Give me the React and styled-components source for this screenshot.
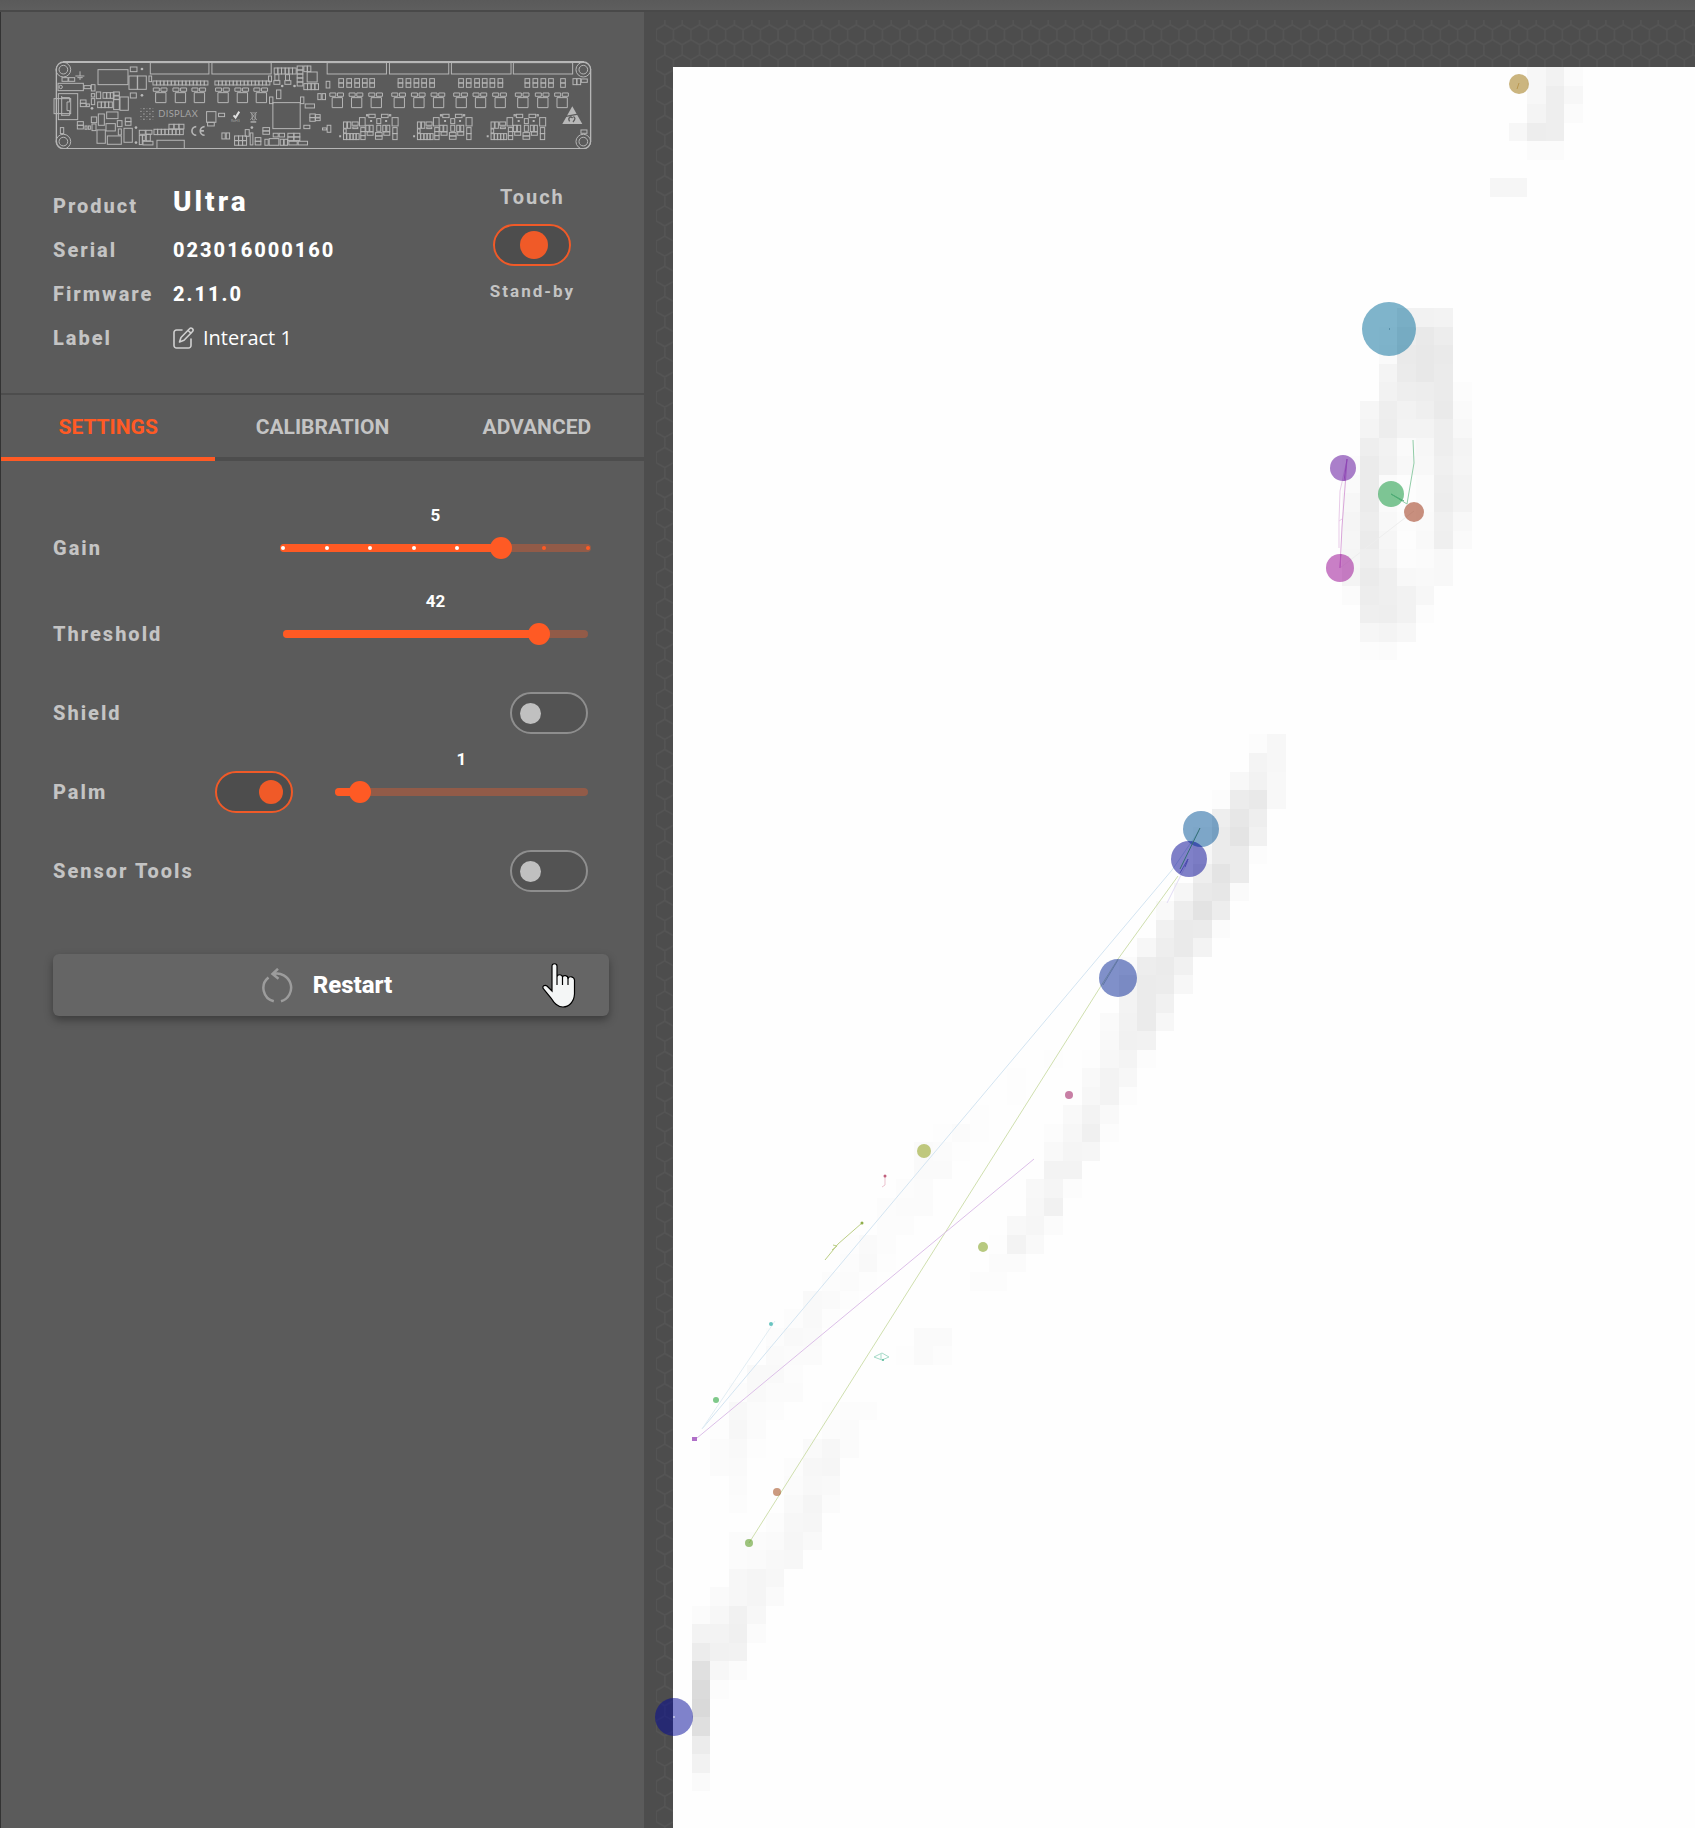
import React, { useState } from "react";
import styled, { createGlobalStyle } from "styled-components";

const color = {
  panel: "#5b5b5b",
  deep: "#4d4d4d",
  orange: "#ff5a24",
  knob: "#f05a28",
  muted: "#c4c4c4",
};

/* ---------- page ---------- */

const hexTile = (() => {
  let d = "";
  for (let r = 0; r < 5; r++)
    for (let c = 0; c < 7; c++) {
      d += `M${c * 174 + 87} ${r * 302}v47l87 50v101l-87 50l-87-50v-101l87-50m0 201v54`;
    }
  const svg = `<svg xmlns='http://www.w3.org/2000/svg' viewBox='0 0 1218 1510'><path d='${d}' fill='none' stroke='#545454' stroke-width='16'/></svg>`;
  return `url("data:image/svg+xml,${encodeURIComponent(svg)}")`;
})();

const GlobalStyle = createGlobalStyle`
  *, *::before, *::after { box-sizing: border-box; }
  body { margin: 0; background: ${color.deep}; font-family: Roboto, "Liberation Sans", sans-serif; }
  button { font: inherit; color: inherit; border: 0; background: none; padding: 0; cursor: pointer; }
`;

const Page = styled.div`
  min-height: 100vh;
  display: flex;
  flex-direction: column;
  overflow: hidden;
`;

const TopBar = styled.header`
  height: 12px;
  background: linear-gradient(#5a5a5a, #5e5e5e);
  border-bottom: 2px solid #494949;
`;

const Body = styled.div`
  flex: 1;
  display: grid;
  grid-template-columns: 644px minmax(0, 1fr);
`;

const Sidebar = styled.aside`
  background: ${color.panel};
  border-left: 1px solid #333;
`;

const Stage = styled.main`
  padding: 8px 0 0 12px;
  background-image: ${hexTile};
  background-size: 122px 151px;
  background-origin: content-box;
  background-clip: content-box;
`;

const Canvas = styled.div`
  margin: 47px 0 0 17px;
  background: #fefefe;
  svg {
    display: block;
    width: 100%;
    height: auto;
    overflow: visible;
  }
`;

/* ---------- product header ---------- */

const Product = styled.section`
  padding: 48px 52px 33px;
  border-bottom: 2px solid ${color.deep};
`;

const BoardSvg = styled.svg`
  display: block;
  width: 100%;
  height: auto;
`;

const Summary = styled.div`
  display: flex;
  justify-content: space-between;
  margin-top: 35px;
`;

const Facts = styled.dl`
  display: grid;
  grid-template-columns: 120px auto;
  grid-auto-rows: 44px;
  align-items: center;
  margin: 0;
  font-size: 20px;
  font-weight: 800;
  line-height: 24px;
  letter-spacing: 2px;
`;

const Term = styled.dt`
  color: ${color.muted};
`;

const Fact = styled.dd`
  margin: 0;
  color: #fff;
`;

const ProductName = styled(Fact)`
  padding-bottom: 8px;
  font-size: 28px;
  letter-spacing: 3px;
`;

const EditButton = styled.button`
  display: flex;
  align-items: center;
  gap: 9px;
  && {
    font-family: "Open Sans", "Noto Sans", sans-serif;
    font-weight: 400;
  }
  letter-spacing: 0;
`;

const TouchBox = styled.div`
  display: flex;
  flex-direction: column;
  align-items: center;
  gap: 15px;
  margin-right: 17px;
  padding-top: 1px;
  color: ${color.muted};
  font-weight: 700;
  letter-spacing: 2px;
`;

const TouchTitle = styled.label`
  font-size: 20px;
  line-height: 24px;
`;

const TouchState = styled.span`
  font-size: 17px;
  line-height: 20px;
`;

const Switch = styled.input.attrs({ type: "checkbox", role: "switch" })`
  appearance: none;
  flex: none;
  display: flex;
  align-items: center;
  justify-content: ${(p) => (p.$half ? "center" : p.checked ? "flex-end" : "flex-start")};
  width: 78px;
  height: 42px;
  margin: 0;
  padding: ${(p) => (p.$half ? "0 6px 0 10px" : "0 8px")};
  border: 2px solid ${(p) => (p.checked ? color.knob : "#8e8e8e")};
  border-radius: 21px;
  background: ${(p) => (p.checked ? color.deep : "#535353")};
  cursor: pointer;
  &::before {
    content: "";
    width: ${(p) => (p.$half ? 28 : p.checked ? 24 : 21)}px;
    height: ${(p) => (p.$half ? 28 : p.checked ? 24 : 21)}px;
    border-radius: 50%;
    background: ${(p) => (p.checked ? color.knob : "#c0c0c0")};
  }
`;

/* ---------- tabs ---------- */

const Tabs = styled.nav`
  display: grid;
  grid-template-columns: repeat(3, 1fr);
`;

const Tab = styled.button`
  && {
    height: 66px;
    padding-top: 2px;
    border-bottom: 4px solid ${(p) => (p.$active ? color.orange : color.deep)};
    color: ${(p) => (p.$active ? color.orange : color.muted)};
    font-size: 21px;
    font-weight: 700;
  }
`;

/* ---------- settings ---------- */

const Form = styled.form`
  display: flex;
  flex-direction: column;
  gap: 15px;
  padding: 44px 35px 0 52px;
`;

const SliderGroup = styled.div`
  display: flex;
  flex-direction: column;
`;

const Row = styled.div`
  display: flex;
  align-items: center;
  justify-content: space-between;
  padding-right: 21px;
`;

const RowLabel = styled.label`
  flex: 1;
  color: ${color.muted};
  font-size: 20px;
  font-weight: 800;
  line-height: 24px;
  letter-spacing: 2px;
`;

const SliderBox = styled.div`
  width: ${(p) => (p.$short ? 253 : 305)}px;
  margin-left: ${(p) => (p.$short ? 42 : 0)}px;
  height: 86px;
  display: flex;
  flex-direction: column;
  gap: 11px;
`;

const Value = styled.output`
  color: #fff;
  font-size: 17px;
  font-weight: 700;
  line-height: 20px;
  text-align: center;
`;

const RailBox = styled.div`
  position: relative;
  height: 24px;
  display: flex;
  align-items: center;
`;

const Rail = styled.div`
  flex: 1;
  height: 8px;
  margin: 0 ${(p) => (p.$ticks ? -3 : 0)}px;
  border-radius: 4px;
  background: #925b48;
`;

const Fill = styled.div`
  height: 8px;
  border-radius: 4px;
  background: ${color.orange};
`;

const Ticks = styled.div`
  position: absolute;
  inset: 0 -2px;
  display: flex;
  align-items: center;
  justify-content: space-between;
`;

const Tick = styled.i`
  width: 4px;
  height: 4px;
  border-radius: 50%;
  background: ${(p) => (p.$on ? "#fff" : color.orange)};
`;

const Range = styled.input.attrs({ type: "range" })`
  appearance: none;
  position: absolute;
  inset: 0 -11px;
  width: calc(100% + 22px);
  height: 24px;
  margin: 0;
  background: transparent;
  cursor: pointer;
  &::-webkit-slider-thumb {
    appearance: none;
    width: 22px;
    height: 22px;
    border: 0;
    border-radius: 50%;
    background: ${color.orange};
  }
`;

const RestartButton = styled.button`
  && {
    position: relative;
    display: flex;
    align-items: center;
    justify-content: center;
    gap: 20px;
    height: 62px;
    margin-top: 47px;
    padding-right: 8px;
    border-radius: 6px;
    background: #656565;
    box-shadow: 0 4px 8px rgba(0, 0, 0, 0.35);
    color: #fff;
    font-size: 24px;
    font-weight: 800;
  }
`;

const Pointer = styled.svg`
  position: absolute;
  right: 33px;
  top: 9px;
`;

/* ---------- circuit board drawing ---------- */

const plain = [
  [67, 97, 18, 11], [87, 97, 18, 11], [55, 114, 76, 22], [133, 121, 20, 9], [155, 118, 11, 19],
  [43, 160, 50, 45], [56, 145, 58, 78], [175, 73, 90, 45], [272, 65, 20, 14], [268, 92, 25, 40],
  [294, 92, 26, 40], [328, 92, 8, 17], [272, 143, 18, 15], [332, 52, 176, 34], [517, 52, 178, 34],
  [863, 52, 178, 34], [1050, 52, 178, 34], [1236, 52, 179, 34], [1422, 52, 178, 34], [687, 92, 9, 17],
  [170, 140, 13, 20], [221, 140, 18, 10], [221, 152, 18, 10], [222, 163, 17, 30], [241, 155, 25, 40],
  [141, 176, 8, 8], [155, 145, 10, 10], [155, 160, 10, 18], [201, 200, 34, 20], [176, 206, 18, 34],
  [155, 215, 16, 17], [157, 236, 12, 20], [136, 242, 6, 10], [146, 242, 6, 10], [199, 235, 28, 22],
  [172, 254, 25, 40], [203, 272, 42, 25], [233, 226, 14, 18], [236, 251, 9, 18], [253, 249, 25, 42],
  [62, 247, 10, 18], [299, 255, 18, 12], [319, 255, 18, 12], [299, 270, 9, 28], [309, 270, 8, 16],
  [320, 267, 12, 20], [310, 288, 30, 11], [352, 285, 82, 25], [501, 199, 28, 32], [504, 231, 20, 11],
  [537, 204, 18, 10], [547, 263, 10, 18], [560, 263, 10, 18], [617, 253, 12, 20], [632, 263, 8, 36],
  [676, 282, 10, 18], [689, 280, 29, 20], [722, 282, 10, 18], [734, 282, 10, 18], [701, 264, 15, 11],
  [719, 264, 16, 11], [748, 288, 25, 11], [776, 288, 28, 11], [700, 172, 82, 78], [690, 155, 10, 20],
  [783, 155, 10, 20], [711, 134, 13, 26], [797, 176, 28, 12], [828, 208, 14, 8], [828, 218, 14, 8],
  [793, 240, 18, 10], [863, 240, 11, 21], [849, 248, 12, 6], [793, 62, 10, 17], [804, 62, 10, 17],
  [803, 80, 30, 30], [706, 88, 12, 17], [738, 88, 12, 17], [703, 106, 18, 11], [736, 106, 18, 11],
  [835, 145, 10, 18], [848, 145, 10, 18], [860, 108, 11, 20], [1601, 100, 11, 18], [1613, 100, 11, 18],
  [1626, 101, 18, 10], [1625, 254, 18, 10],
];

/* x, y, cell width, cell height, columns, rows */
const cells = [
  [340, 107, 11, 12, 15, 1], [526, 107, 11, 12, 15, 1], [190, 142, 11, 17, 3, 1], [174, 170, 11, 17, 4, 1],
  [122, 164, 17, 10, 1, 2], [113, 229, 18, 11, 1, 2], [257, 218, 17, 11, 1, 2], [388, 237, 15, 14, 3, 1],
  [343, 252, 11, 16, 8, 1], [585, 272, 12, 14, 3, 2], [647, 277, 17, 11, 1, 2], [670, 247, 20, 10, 1, 2],
  [745, 264, 18, 11, 2, 2], [811, 206, 16, 11, 1, 2], [704, 68, 11, 18, 6, 1], [773, 62, 17, 12, 1, 5],
  [793, 115, 11, 18, 4, 1],
  ...[58, 82, 106, 129, 151, 236, 260, 284, 307, 331, 418, 441, 466, 489, 512, 536, 617, 641, 665, 688, 724].map(
    (x) => [840 + x, 100, 14, 13, 1, 2]
  ),
];

const chips = [
  ...[341, 400, 457, 528, 586, 643].map((x) => [x, 128]),
  ...[31, 89, 148, 217, 276, 335, 403, 461, 520, 588, 648, 706].map((x) => [840 + x, 143]),
];

const cluster = [
  [72, 230, 10, 19], [84, 230, 10, 19], [98, 230, 18, 10], [72, 251, 8, 12], [100, 245, 15, 5],
  [120, 217, 17, 25], [124, 247, 13, 12], [124, 259, 13, 12], [124, 271, 13, 12], [148, 207, 19, 10],
  [139, 240, 10, 19], [151, 240, 10, 19], [143, 260, 18, 10], [172, 220, 12, 15], [172, 240, 12, 18],
  [168, 262, 20, 10], [168, 272, 20, 10], [186, 207, 20, 10], [190, 240, 9, 19], [202, 240, 9, 19],
  [193, 260, 18, 10], [218, 217, 18, 25], [220, 247, 13, 18], [220, 265, 13, 18], [72, 265, 9, 18],
  [82, 265, 9, 18], [92, 265, 9, 18], [101, 265, 9, 18], [110, 265, 9, 18], [141, 208, 4, 4], [210, 208, 4, 4],
];

const dots = [[307, 71], [307, 150], [157, 189], [289, 247], [289, 292], [637, 247], [728, 122], [765, 122]];

function Board() {
  return (
    <BoardSvg viewBox="40 44 1618 268" role="img" aria-label="Controller board">
      <g fill="none" stroke="#b6b6b6" strokeWidth="3">
        <rect x="50" y="50" width="1604" height="260" rx="22" strokeWidth="4" />
        <path d="M70 50H1634" strokeWidth="5" stroke="#c0c0c0" />
        {[[71, 73], [71, 289], [1632, 73], [1632, 289]].map(([x, y]) => (
          <g key={`${x}-${y}`}>
            <circle cx={x} cy={y} r="22" />
            <circle cx={x} cy={y} r="13" />
          </g>
        ))}
        {plain.map(([x, y, w, h], i) => (
          <rect key={i} x={x} y={y} width={w} height={h} />
        ))}
        {cells.flatMap(([x, y, w, h, c, r], i) =>
          Array.from({ length: c * r }, (_, k) => (
            <rect key={`${i}-${k}`} x={x + (k % c) * w} y={y + Math.floor(k / c) * h} width={w} height={h} />
          ))
        )}
        {chips.map(([x, y]) => (
          <path key={x} d={`M${x} ${y}h18v10h-18zM${x + 23} ${y}h18v10h-18zM${x + 7} ${y + 14}h31v30h-31z`} />
        ))}
        {[840, 1062, 1283].map((dx) => (
          <g key={dx} transform={`translate(${dx} 0)`}>
            {cluster.map(([x, y, w, h], i) => (
              <rect key={i} x={x} y={y} width={w} height={h} />
            ))}
            <path d="M62 270v6M155 224v6M200 224v6" strokeWidth="6" />
          </g>
        ))}
        <path d="M121 78V92M107 92H134M113 97H129M118 101H124M66 152V212M66 157H90V170H82V196H90V210H66" />
        <circle cx="63" cy="125" r="5" />
        <path d="M470 244A13 13 0 0 0 470 270M495 244A13 13 0 0 0 495 270M483 257H493" strokeWidth="5" />
        <path d="M582 210L588 217L599 199" strokeWidth="6" stroke="#e0e0e0" />
        <path d="M634 203H650M637 206L639 224H646L649 206M632 200L652 224M652 200L632 224" strokeWidth="2" />
        <path d="M633 230H650" strokeWidth="4" />
      </g>
      <g fill="#b8b8b8">
        {dots.map(([x, y]) => (
          <circle key={`${x}-${y}`} cx={x} cy={y} r="4" />
        ))}
        {Array.from({ length: 25 }, (_, k) => {
          const c = k % 5;
          const r = Math.floor(k / 5);
          return <circle key={k} cx={304 + c * 9} cy={190 + r * 8} r={(c + r) % 2 ? 2 : 1} />;
        })}
        <text x="356" y="214" fontFamily="Lato, sans-serif" fontSize="28" letterSpacing="1" opacity="0.8">DISPLAX</text>
        <text x="574" y="231" fontFamily="Lato, sans-serif" fontSize="11" opacity="0.7">RoHS</text>
        <path d="M1599 183L1629 236H1569Z" />
      </g>
      <path d="M1572 215L1628 204M1591 228C1584 217 1594 212 1600 218M1601 230C1609 222 1608 216 1602 214" stroke={color.panel} strokeWidth="4" fill="none" />
    </BoardSvg>
  );
}

/* ---------- touch signal map ---------- */

/* row: [first column, darkness, darkness, ...] runs */
const heat = {
  0: [[46, 8, 13, 4]], 1: [[46, 8, 17, 8]], 2: [[46, 11, 17, 4]], 3: [[45, 8, 18, 17]], 4: [[46, 4, 4]],
  6: [[44, 9, 9, 1]],
  13: [[39, 13, 13, 12]], 14: [[38, 3, 18, 22, 18]], 15: [[38, 5, 21, 23, 21, 1]], 16: [[38, 11, 20, 23, 20, 1]],
  17: [[38, 13, 17, 18, 20, 3]], 18: [[37, 9, 17, 13, 16, 21, 5]], 19: [[37, 11, 18, 12, 12, 17, 7]],
  20: [[37, 17, 13, 5, 8, 17, 11]], 21: [[36, 3, 20, 14, 7, 7, 15, 10]], 22: [[36, 5, 20, 4, 2, 4, 17, 12]],
  23: [[36, 8, 20, 5, 2, 4, 18, 12]], 24: [[36, 10, 18, 7, 3, 5, 15, 7]], 25: [[36, 9, 20, 9, 2, 6, 16, 5]],
  26: [[36, 10, 17, 11, 3, 4, 7]], 27: [[36, 11, 20, 16, 7, 6, 7]], 28: [[36, 4, 18, 16, 13, 8]],
  29: [[36, 1, 16, 17, 13, 3]], 30: [[37, 9, 11, 8]], 31: [[37, 3, 4]],
  35: [[32, 1]], 36: [[31, 3, 8]], 37: [[30, 1, 11, 8]], 38: [[30, 7, 13, 7]], 39: [[29, 3, 19, 22, 7]],
  40: [[29, 17, 24, 17]], 41: [[28, 5, 20, 27, 14]], 42: [[28, 9, 20, 20, 3]], 43: [[28, 17, 27, 20]],
  44: [[27, 9, 22, 24, 5]], 45: [[26, 6, 18, 28, 18]], 46: [[26, 14, 21, 20, 4]], 47: [[25, 8, 17, 21, 12]],
  48: [[24, 4, 18, 20, 14]], 49: [[24, 12, 20, 19, 8]], 50: [[24, 12, 20, 14]], 51: [[23, 5, 13, 20, 8]],
  52: [[23, 6, 14, 13]], 53: [[20, 2], [22, 2, 8, 11, 3]], 54: [[18, 2, 1], [22, 6, 12, 8]],
  55: [[18, 2], [22, 8, 12, 3]], 56: [[16, 2], [21, 6, 12, 6]], 57: [[14, 2, 4, 2], [20, 3, 8, 15, 3]],
  58: [[13, 5, 4, 2], [20, 6, 10, 9]], 59: [[13, 5, 5], [20, 12, 12]], 60: [[12, 3, 4], [19, 7, 10, 3]],
  61: [[11, 3, 4, 4], [19, 8, 14]], 62: [[11, 3, 3], [18, 7, 9, 4]], 63: [[9, 2, 5, 3], [17, 2, 12, 6]],
  64: [[9, 3, 6, 2], [17, 4, 4]], 65: [[8, 3, 4, 2], [16, 3, 3]], 66: [[7, 6, 5, 2]], 67: [[6, 3, 6, 2]],
  68: [[5, 3, 6, 5], [13, 5, 5]], 69: [[5, 5, 4, 4], [12, 2, 5, 3]], 70: [[4, 6, 6, 3], [12, 1, 1]],
  71: [[3, 3, 6, 4, 4]], 72: [[3, 7, 4, 3], [8, 2, 3, 3]], 73: [[2, 2, 8, 4], [8, 3, 4]],
  74: [[2, 4, 6, 2], [7, 5, 8, 4]], 75: [[2, 4, 5], [6, 3, 8, 9]], 76: [[3, 4], [6, 4, 7, 6]],
  77: [[3, 3], [6, 6, 10, 4]], 78: [[5, 3, 8, 9]], 79: [[3, 4, 4, 5, 9, 6]], 80: [[3, 4, 5, 7, 8]],
  81: [[3, 8, 10, 8]], 82: [[1, 1, 5, 8, 10, 5]], 83: [[1, 4, 8, 14, 8]], 84: [[1, 12, 12, 15, 4]],
  85: [[1, 19, 14, 13]], 86: [[1, 31, 8, 4]], 87: [[1, 36, 3]], 88: [[1, 38]], 89: [[1, 32]], 90: [[1, 19]],
  91: [[1, 13]], 92: [[1, 5]],
};

const PITCH_X = 18.57;
const PITCH_Y = 18.54;

const heatCells = Object.entries(heat).flatMap(([row, runs]) =>
  runs.flatMap(([start, ...values]) =>
    values.map((v, i) => {
      const c = start + i;
      const x = Math.round(c * PITCH_X);
      const y = Math.round(row * PITCH_Y);
      const g = 255 - v;
      return {
        key: `${row}-${c}`,
        x,
        y,
        width: Math.round((c + 1) * PITCH_X) - x,
        height: Math.round((Number(row) + 1) * PITCH_Y) - y,
        fill: `rgb(${g},${g},${g})`,
      };
    })
  )
);

const touches = [
  [846, 17, 10, "rgb(151,107,0)"], [716, 262, 27, "rgb(0,105,151)"], [670, 401, 13, "rgb(85,0,149)"],
  [718, 427, 13, "rgb(0,143,45)"], [741, 445, 10, "rgb(147,33,0)"], [667, 501, 14, "rgb(147,0,141)"],
  [528, 762, 18, "rgb(0,81,149)"], [516, 792, 18, "rgb(0,1,145)"], [445, 911, 19, "rgb(1,33,147)"],
  [396, 1028, 4, "rgb(145,0,75)"], [310, 1180, 5, "rgb(111,147,0)"], [251, 1084, 7, "rgb(131,149,0)"],
  [43, 1333, 3, "rgb(0,147,21)"], [104, 1425, 4, "rgb(151,53,0)"], [76, 1476, 4, "rgb(63,139,0)"],
  [1, 1650, 19, "rgb(0,6,152)"],
];

const trails = [
  ["M29 1362L499 803L526 764", "#d3e4f1"],
  ["M76 1476L445 892L505 809", "#cfdfae"],
  ["M24 1371L361 1092", "#dcbfe8"],
  ["M29 1362L102 1254", "#e2edf3"],
  ["M515 794L494 836", "#e2dcf5"],
  ["M189 1156L165 1177L152 1193M159 1183L164 1179L160 1178", "#bccf86"],
  ["M201 1290L209 1286L216 1290L209 1293ZM208 1287V1293", "#a5dac8"],
  ["M740 373L741 396L734 437L718 427", "#92cda8"],
  ["M674 392L672 420L669 460L667 501", "#d9a5d9"],
  ["M674 393L667 424L666 454L669 452M666 454V481", "#e8cbe8"],
  ["M741 444L667 501", "#eeeeee"],
  ["M212 1109V1118L209 1120", "#ecc3cf"],
];

const overTrails = [
  ["M507 802L527 761", "#336f72"],
  ["M507 806L515 792L512 800", "#4a48ae"],
  ["M430 918L445 893", "#6075a8"],
  ["M674 392L671 414", "#8d44b5"],
  ["M668 487L667 501", "#b558b8"],
  ["M718 427L731 434", "#4fab78"],
  ["M716 262h1", "#34708b"],
  ["M844 22l2 -6", "#b9964f"],
];

function TouchMap() {
  return (
    <svg viewBox="0 0 1022 1761" role="img" aria-label="Touch signal map">
      <g shapeRendering="crispEdges">
        {heatCells.map(({ key, ...rect }) => (
          <rect key={key} {...rect} />
        ))}
      </g>
      <g fill="none">
        {trails.map(([d, stroke]) => (
          <path key={d} d={d} stroke={stroke} />
        ))}
      </g>
      <g fillOpacity="0.5">
        {touches.map(([x, y, r, fill]) => (
          <circle key={`${x}-${y}`} cx={x} cy={y} r={r} fill={fill} />
        ))}
      </g>
      <g fill="none">
        {overTrails.map(([d, stroke]) => (
          <path key={d} d={d} stroke={stroke} />
        ))}
      </g>
      <rect x="19" y="1370" width="5" height="4" fill="#b070c8" />
      <circle cx="98" cy="1257" r="2" fill="#68c4c0" />
      <circle cx="212" cy="1109" r="1.5" fill="#c0607c" />
      <circle cx="189" cy="1156" r="1.5" fill="#8fae4a" />
      <circle cx="210" cy="1293" r="1" fill="#4fb795" />
      <circle cx="1" cy="1650" r="1" fill="#c9cbe8" />
    </svg>
  );
}

/* ---------- controls ---------- */

function Slider({ id, label, value, max, onChange, ticks, short }) {
  return (
    <SliderBox $short={short}>
      <Value htmlFor={id}>{value}</Value>
      <RailBox>
        <Rail $ticks={ticks}>
          <Fill style={{ width: `${(value / max) * 100}%` }} />
        </Rail>
        {ticks && (
          <Ticks>
            {Array.from({ length: max + 1 }, (_, i) => (
              <Tick key={i} $on={i < value} />
            ))}
          </Ticks>
        )}
        <Range
          id={id}
          aria-label={label}
          min="0"
          max={max}
          value={value}
          onChange={(e) => onChange(Number(e.target.value))}
        />
      </RailBox>
    </SliderBox>
  );
}

export default function App() {
  const [tab, setTab] = useState("SETTINGS");
  const [touch, setTouch] = useState(true);
  const [gain, setGain] = useState(5);
  const [threshold, setThreshold] = useState(42);
  const [shield, setShield] = useState(false);
  const [palm, setPalm] = useState(true);
  const [palmSize, setPalmSize] = useState(1);
  const [tools, setTools] = useState(false);

  return (
    <Page>
      <GlobalStyle />
      <TopBar />
      <Body>
        <Sidebar>
          <Product>
            <Board />
            <Summary>
              <Facts>
                <Term>Product</Term>
                <ProductName>Ultra</ProductName>
                <Term>Serial</Term>
                <Fact>023016000160</Fact>
                <Term>Firmware</Term>
                <Fact>2.11.0</Fact>
                <Term>Label</Term>
                <Fact>
                  <EditButton type="button">
                    <svg width="21" height="22" viewBox="0 0 21 22" fill="none" stroke="#d0d0d0" strokeWidth="1.6" strokeLinejoin="round" strokeLinecap="round" aria-hidden="true">
                      <path d="M9 3H3.500A2.500 2.500 0 0 0 1 5.500V18.500A2.500 2.500 0 0 0 3.500 21H15.500A2.500 2.500 0 0 0 18 18.500V12" />
                      <path d="M6.500 15L8 10.500L16.500 1.800A1.900 1.900 0 0 1 19.500 4.500L11 13.300L6.500 15ZM15 3.500L18 6.200" />
                    </svg>
                    Interact 1
                  </EditButton>
                </Fact>
              </Facts>
              <TouchBox>
                <TouchTitle htmlFor="touch">Touch</TouchTitle>
                <Switch id="touch" $half checked={touch} onChange={(e) => setTouch(e.target.checked)} />
                <TouchState>Stand-by</TouchState>
              </TouchBox>
            </Summary>
          </Product>
          <Tabs>
            {["SETTINGS", "CALIBRATION", "ADVANCED"].map((name) => (
              <Tab key={name} type="button" $active={tab === name} onClick={() => setTab(name)}>
                {name}
              </Tab>
            ))}
          </Tabs>
          <Form onSubmit={(e) => e.preventDefault()}>
            <SliderGroup>
              <Row>
                <RowLabel htmlFor="gain">Gain</RowLabel>
                <Slider id="gain" value={gain} max={7} onChange={setGain} ticks />
              </Row>
              <Row>
                <RowLabel htmlFor="threshold">Threshold</RowLabel>
                <Slider id="threshold" value={threshold} max={50} onChange={setThreshold} />
              </Row>
            </SliderGroup>
            <Row>
              <RowLabel htmlFor="shield">Shield</RowLabel>
              <Switch id="shield" checked={shield} onChange={(e) => setShield(e.target.checked)} />
            </Row>
            <Row>
              <RowLabel htmlFor="palm">Palm</RowLabel>
              <Switch id="palm" checked={palm} onChange={(e) => setPalm(e.target.checked)} />
              <Slider id="palm-size" label="Palm size" value={palmSize} max={10} onChange={setPalmSize} short />
            </Row>
            <Row>
              <RowLabel htmlFor="tools">Sensor Tools</RowLabel>
              <Switch id="tools" checked={tools} onChange={(e) => setTools(e.target.checked)} />
            </Row>
            <RestartButton type="button">
              <svg width="31" height="35" viewBox="0 0 31 35" fill="none" stroke="#9c9c9c" strokeWidth="2.500" aria-hidden="true">
                <path d="M6.500 9.500A13.600 13.600 0 0 0 11.800 33.300M19 33.300A13.600 13.600 0 0 0 11 6.200M16 0.800L10.500 6L16.500 10.800" />
              </svg>
              Restart
              <Pointer width="34" height="45" viewBox="0 0 34 45" aria-hidden="true">
                <path d="M10 3C10 0 15 0 15 3V14C15 11 20 11 20.500 14C21 12 26 12 26 15.500C27 13 32 13 32.500 17V31C32 39 27 44 21 44C15 44 12 40 9 35L1.500 26C-0.500 23 3 21.500 5 23L10 28Z" fill="#f4f6f6" stroke="#000" strokeWidth="1.200" />
                <path d="M15 14V22M20.500 14V22M26 15V22" stroke="#000" strokeWidth="1.200" />
              </Pointer>
            </RestartButton>
          </Form>
        </Sidebar>
        <Stage>
          <Canvas>
            <TouchMap />
          </Canvas>
        </Stage>
      </Body>
    </Page>
  );
}
